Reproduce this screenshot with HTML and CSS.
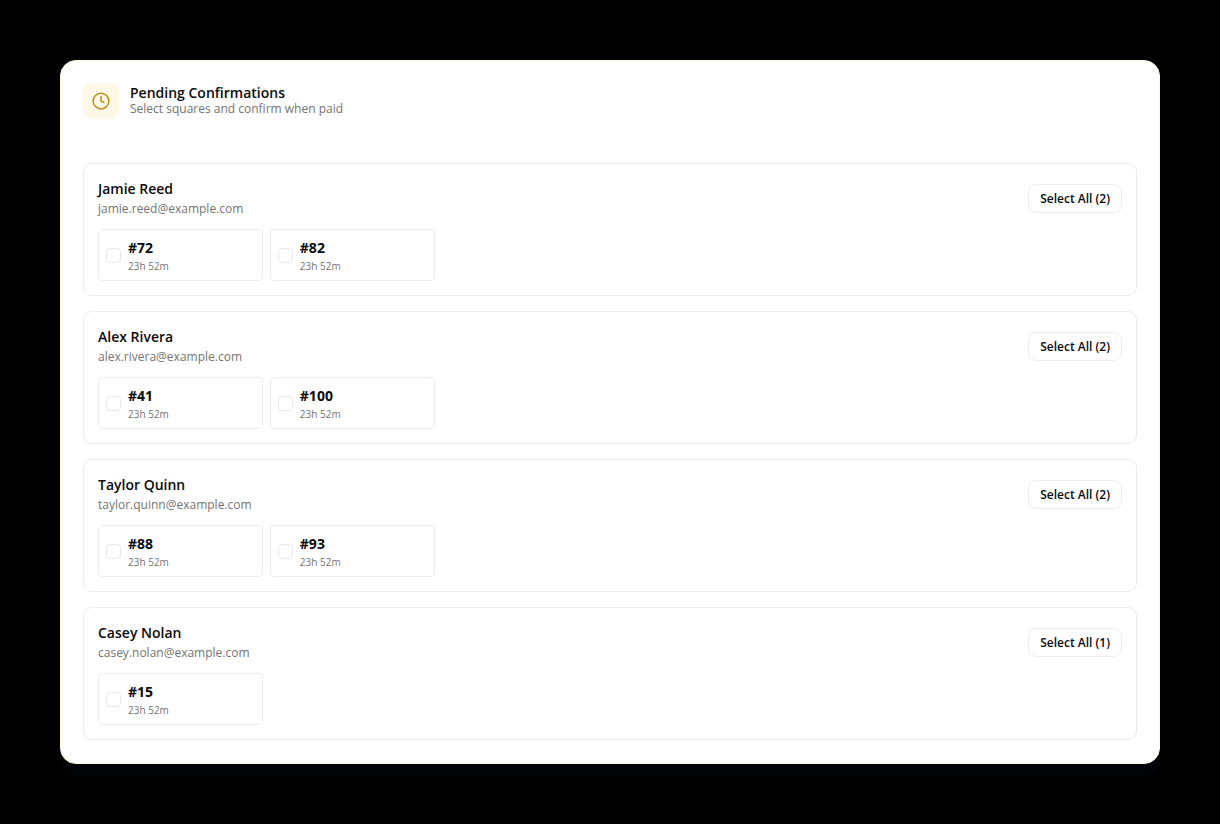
FILE: index.html
```
<!DOCTYPE html>
<html lang="en">
<head>
  <meta charset="UTF-8" />
  <meta name="viewport" content="width=device-width, initial-scale=1.0"/>
  <title>Pending Confirmations</title>
  <link rel="stylesheet" href="styles.css">
</head>
<body>

  <main class="pending-card">
    <header class="card-header">
      <div class="header-icon">
        <svg width="18" height="18" viewBox="0 0 24 24" fill="none" stroke="currentColor" stroke-width="2" stroke-linecap="round" stroke-linejoin="round" aria-hidden="true">
          <circle cx="12" cy="12" r="10.5" />
          <path d="M12 6v6l4 2" />
        </svg>
      </div>
      <div>
        <h1>Pending Confirmations</h1>
        <p>Select squares and confirm when paid</p>
      </div>
    </header>

    <div class="group-list">
      <section class="group">
        <div class="group-header">
          <div>
            <h2>Jamie Reed</h2>
            <p class="email">jamie.reed@example.com</p>
          </div>
          <button type="button" class="select-all">Select All (2)</button>
        </div>
        <div class="squares">
          <label class="square" for="square72">
            <input type="checkbox" id="square72" name="square" value="72" />
            <span class="square-text">
              <span class="number">#72</span>
              <span class="time">23h 52m</span>
            </span>
          </label>
          <label class="square" for="square82">
            <input type="checkbox" id="square82" name="square" value="82" />
            <span class="square-text">
              <span class="number">#82</span>
              <span class="time">23h 52m</span>
            </span>
          </label>
        </div>
      </section>

      <section class="group">
        <div class="group-header">
          <div>
            <h2>Alex Rivera</h2>
            <p class="email">alex.rivera@example.com</p>
          </div>
          <button type="button" class="select-all">Select All (2)</button>
        </div>
        <div class="squares">
          <label class="square" for="square41">
            <input type="checkbox" id="square41" name="square" value="41" />
            <span class="square-text">
              <span class="number">#41</span>
              <span class="time">23h 52m</span>
            </span>
          </label>
          <label class="square" for="square100">
            <input type="checkbox" id="square100" name="square" value="100" />
            <span class="square-text">
              <span class="number">#100</span>
              <span class="time">23h 52m</span>
            </span>
          </label>
        </div>
      </section>

      <section class="group">
        <div class="group-header">
          <div>
            <h2>Taylor Quinn</h2>
            <p class="email">taylor.quinn@example.com</p>
          </div>
          <button type="button" class="select-all">Select All (2)</button>
        </div>
        <div class="squares">
          <label class="square" for="square88">
            <input type="checkbox" id="square88" name="square" value="88" />
            <span class="square-text">
              <span class="number">#88</span>
              <span class="time">23h 52m</span>
            </span>
          </label>
          <label class="square" for="square93">
            <input type="checkbox" id="square93" name="square" value="93" />
            <span class="square-text">
              <span class="number">#93</span>
              <span class="time">23h 52m</span>
            </span>
          </label>
        </div>
      </section>

      <section class="group">
        <div class="group-header">
          <div>
            <h2>Casey Nolan</h2>
            <p class="email">casey.nolan@example.com</p>
          </div>
          <button type="button" class="select-all">Select All (1)</button>
        </div>
        <div class="squares">
          <label class="square" for="square15">
            <input type="checkbox" id="square15" name="square" value="15" />
            <span class="square-text">
              <span class="number">#15</span>
              <span class="time">23h 52m</span>
            </span>
          </label>
        </div>
      </section>
    </div>
  </main>

</body>
</html>
```
FILE: styles.css
```
* {
  box-sizing: border-box;
}

body {
  font-family: "Segoe UI", "Open Sans", "Noto Sans", sans-serif;
  background: #000;
  color: #0a0a0a;
  margin: 0;
  padding: 60px;
}

h1,
h2,
p {
  margin: 0;
}

.pending-card {
  background: #fff;
  border: 1px solid #fef9d8;
  border-radius: 16px;
  padding: 22px 22px 23px;
  box-shadow: 0 14px 6px -2px #03050a;
}

.card-header {
  display: flex;
  align-items: center;
  gap: 11px;
  margin-bottom: 44px;
}

.header-icon {
  display: flex;
  align-items: center;
  justify-content: center;
  width: 36px;
  height: 36px;
  border-radius: 8px;
  background: #fef9e7;
  color: #b98d1c;
}

.card-header h1 {
  font-size: 14px;
  font-weight: 600;
  line-height: 16px;
}

.card-header p {
  font-size: 12px;
  line-height: 16px;
  color: #737373;
}

.group-list {
  display: flex;
  flex-direction: column;
  gap: 15px;
}

.group {
  border: 1px solid #ececec;
  border-radius: 9px;
  padding: 14px;
}

.group-header {
  display: flex;
  align-items: center;
  justify-content: space-between;
  margin-bottom: 11px;
}

.group-header h2 {
  font-size: 14px;
  font-weight: 600;
  line-height: 22px;
}

.email {
  font-size: 12px;
  line-height: 18px;
  color: #737373;
}

.select-all {
  height: 29px;
  padding: 0 11px;
  font-family: inherit;
  font-size: 12px;
  font-weight: 600;
  color: #0a0a0a;
  background: #fff;
  border: 1px solid #ececec;
  border-radius: 8px;
  cursor: pointer;
}

.select-all:hover {
  background: #f5f5f5;
}

.squares {
  display: grid;
  grid-template-columns: repeat(6, 1fr);
  gap: 7px;
}

.square {
  display: flex;
  align-items: center;
  gap: 7px;
  height: 52px;
  padding: 0 7px;
  border: 1px solid #ececec;
  border-radius: 4px;
  cursor: pointer;
}

.square input {
  appearance: none;
  width: 15px;
  height: 15px;
  margin: 0;
  border: 1px solid #e8e8e8;
  border-radius: 4px;
  background: #fff;
}

.square input:checked {
  background: #b98d1c;
  border-color: #b98d1c;
}

.square-text {
  display: flex;
  flex-direction: column;
}

.number {
  font-size: 14px;
  font-weight: 700;
  line-height: 22px;
}

.time {
  font-size: 10px;
  line-height: 15px;
  color: #737373;
}
```
